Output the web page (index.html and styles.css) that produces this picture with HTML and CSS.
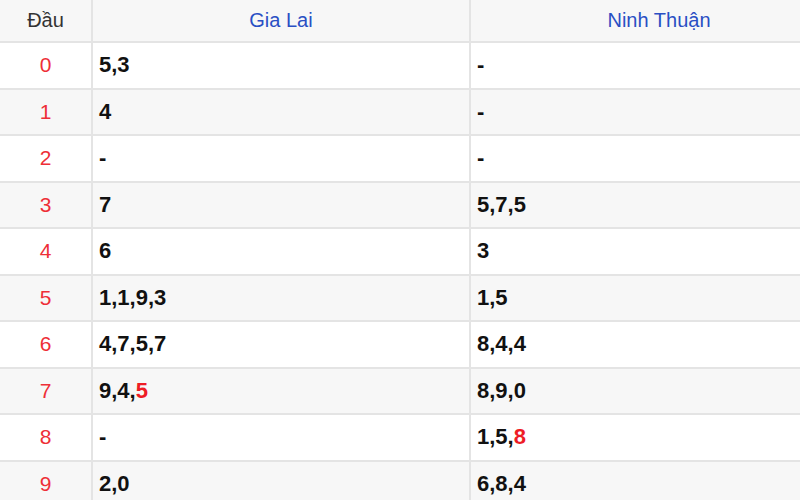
FILE: index.html
```html
<!DOCTYPE html>
<html lang="vi">
<head>
<meta charset="utf-8">
<link rel="stylesheet" href="styles.css">
</head>
<body>
<div class="frame">
<table class="loto">
  <colgroup>
    <col class="c-head">
    <col class="c-prov">
    <col class="c-prov">
  </colgroup>
  <thead>
    <tr>
      <th class="h-dau">Đầu</th>
      <th class="h-prov">Gia Lai</th>
      <th class="h-prov">Ninh Thuận</th>
    </tr>
  </thead>
  <tbody>
    <tr><td class="dau">0</td><td class="num">5,3</td><td class="num">-</td></tr>
    <tr><td class="dau">1</td><td class="num">4</td><td class="num">-</td></tr>
    <tr><td class="dau">2</td><td class="num">-</td><td class="num">-</td></tr>
    <tr><td class="dau">3</td><td class="num">7</td><td class="num">5,7,5</td></tr>
    <tr><td class="dau">4</td><td class="num">6</td><td class="num">3</td></tr>
    <tr><td class="dau">5</td><td class="num">1,1,9,3</td><td class="num">1,5</td></tr>
    <tr><td class="dau">6</td><td class="num">4,7,5,7</td><td class="num">8,4,4</td></tr>
    <tr><td class="dau">7</td><td class="num">9,4,<span class="hit">5</span></td><td class="num">8,9,0</td></tr>
    <tr><td class="dau">8</td><td class="num">-</td><td class="num">1,5,<span class="hit">8</span></td></tr>
    <tr><td class="dau">9</td><td class="num">2,0</td><td class="num">6,8,4</td></tr>
  </tbody>
</table>
</div>
</body>
</html>
```
FILE: styles.css
```css
html, body {
  margin: 0;
  padding: 0;
  overflow: hidden;
  background: #ffffff;
  font-family: "Liberation Sans", Arial, sans-serif;
}

.frame {
  width: 800px;
  height: 500px;
  overflow: hidden;
}

.loto {
  border-collapse: collapse;
  table-layout: fixed;
  width: 848px;
}

.c-head { width: 92px; }
.c-prov { width: 378px; }

.loto th,
.loto td {
  border: 2px solid #e4e4e4;
  padding: 0 6px;
}

.loto tr > :first-child { border-left: none; }
.loto thead th { border-top: none; }

.loto thead tr {
  height: 42px;
  background: #f7f7f7;
}

.loto th {
  font-weight: normal;
  font-size: 20px;
  text-align: center;
}

.h-dau { color: #333333; }
.h-prov { color: #2a4fc4; }

.loto tbody tr {
  height: 46.5px;
}

.loto tbody tr:nth-child(even) {
  background: #f7f7f7;
}

.dau {
  color: #ee2f37;
  font-size: 21px;
  text-align: center;
}

.num {
  color: #111111;
  font-size: 22px;
  font-weight: bold;
  text-align: left;
}

.hit { color: #ee1c25; }
```
